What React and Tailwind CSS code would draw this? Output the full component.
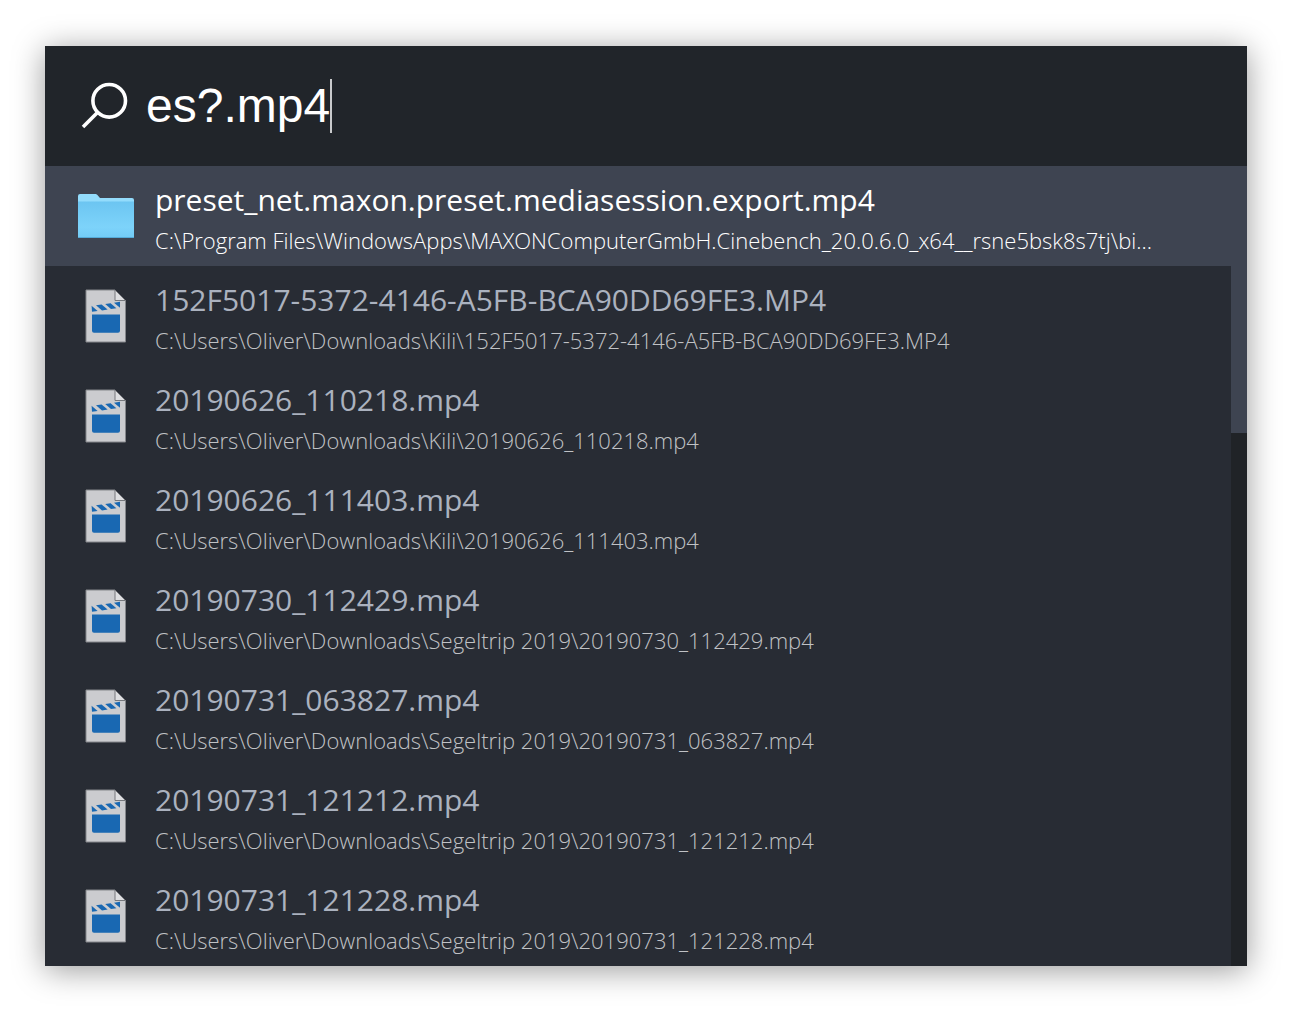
import { useState } from "react";

const results = [
  {
    kind: "folder",
    name: "preset_net.maxon.preset.mediasession.export.mp4",
    path: "C:\\Program Files\\WindowsApps\\MAXONComputerGmbH.Cinebench_20.0.6.0_x64__rsne5bsk8s7tj\\bi...",
  },
  {
    kind: "video",
    name: "152F5017-5372-4146-A5FB-BCA90DD69FE3.MP4",
    path: "C:\\Users\\Oliver\\Downloads\\Kili\\152F5017-5372-4146-A5FB-BCA90DD69FE3.MP4",
  },
  {
    kind: "video",
    name: "20190626_110218.mp4",
    path: "C:\\Users\\Oliver\\Downloads\\Kili\\20190626_110218.mp4",
  },
  {
    kind: "video",
    name: "20190626_111403.mp4",
    path: "C:\\Users\\Oliver\\Downloads\\Kili\\20190626_111403.mp4",
  },
  {
    kind: "video",
    name: "20190730_112429.mp4",
    path: "C:\\Users\\Oliver\\Downloads\\Segeltrip 2019\\20190730_112429.mp4",
  },
  {
    kind: "video",
    name: "20190731_063827.mp4",
    path: "C:\\Users\\Oliver\\Downloads\\Segeltrip 2019\\20190731_063827.mp4",
  },
  {
    kind: "video",
    name: "20190731_121212.mp4",
    path: "C:\\Users\\Oliver\\Downloads\\Segeltrip 2019\\20190731_121212.mp4",
  },
  {
    kind: "video",
    name: "20190731_121228.mp4",
    path: "C:\\Users\\Oliver\\Downloads\\Segeltrip 2019\\20190731_121228.mp4",
  },
];

function SearchIcon() {
  return (
    <svg viewBox="0 0 48 48" className="size-12 shrink-0" fill="none" stroke="#fff" strokeWidth="3.6" aria-hidden="true">
      <circle cx="28.2" cy="18.8" r="16.3" />
      <path d="M16.700 30.300 2 45" />
    </svg>
  );
}

function FolderIcon() {
  return (
    <svg viewBox="0 0 56 46" className="h-[46px] w-14" aria-hidden="true">
      <defs>
        <linearGradient id="folder-front" x1="0" y1="0" x2="0" y2="1">
          <stop offset="0" stopColor="#6cc5f1" />
          <stop offset="0.7" stopColor="#7dd3fa" />
          <stop offset="1" stopColor="#72cbf5" />
        </linearGradient>
      </defs>
      <path d="M0 3a2 2 0 0 1 2-2h15.500q1 0 1.700.8L22 5h32a2 2 0 0 1 2 2v8H0z" fill="#93dcfc" />
      <path d="M0 8.500h56V44a1 1 0 0 1-1 1H1a1 1 0 0 1-1-1z" fill="url(#folder-front)" />
      <path d="M.5 44.500h55" stroke="#55abd8" />
    </svg>
  );
}

function VideoIcon() {
  return (
    <svg viewBox="0 0 42 54" className="h-[54px] w-[42px]" aria-hidden="true">
      <path d="M1 1h29l10.500 10.500V53H1z" fill="#cbcccf" stroke="#85878b" />
      <path d="M30 1v10.500h10.500z" fill="#dedfe1" stroke="#77797d" strokeLinejoin="round" />
      <path d="M7 25.500h28v16.300a2 2 0 0 1-2 2H9a2 2 0 0 1-2-2z" fill="#1968b2" />
      <g fill="#1968b2">
        <path d="M6.600 16.800 12.600 22 7 22.700z" />
        <path d="M11 16.300 16.600 15.500 22.600 20.600 17 21.400z" />
        <path d="M20.200 15 25.600 14.200 31.400 19.200 26 20z" />
        <path d="M29 13.700 35 12.800V18.800z" />
      </g>
    </svg>
  );
}

function Result({ item, selected, onSelect }) {
  return (
    <li>
      <button
        type="button"
        aria-current={selected}
        onClick={onSelect}
        className={
          selected
            ? "flex h-[100px] w-full items-center bg-[#3e4451] pl-8 text-left text-white"
            : "flex h-[100px] w-full items-center pl-8 text-left text-[#abb2bf]"
        }
      >
        <span className="flex w-[58px] shrink-0 justify-center">
          {item.kind === "folder" ? <FolderIcon /> : <VideoIcon />}
        </span>
        <span className="ml-5 min-w-0 flex-1 pt-2 pr-8">
          <span className="block truncate text-[30px] leading-10">{item.name}</span>
          <span
            className={
              selected
                ? "block truncate text-[22px] leading-10 font-light text-white"
                : "block truncate text-[22px] leading-10 font-light text-[#c0c2c5]"
            }
          >
            {item.path}
          </span>
        </span>
      </button>
    </li>
  );
}

export default function App() {
  const [query, setQuery] = useState("es?.mp4");
  const [selected, setSelected] = useState(0);

  return (
    <div className="min-h-screen bg-white px-[45px] py-[46px]">
      <main className="bg-[#282c34] font-['Open_Sans',sans-serif] shadow-[0_4px_30px_rgba(0,0,0,0.4)]">
        <label className="flex h-[120px] items-center bg-[#21252a] pl-9">
          <SearchIcon />
          <input
            type="text"
            aria-label="Search"
            value={query}
            onChange={(e) => setQuery(e.target.value)}
            className="ml-[17px] field-sizing-content max-w-full bg-transparent font-['Liberation_Sans',sans-serif] text-[48px] leading-[56px] text-white caret-transparent outline-none"
          />
          <span className="h-[54px] w-0.5 bg-[#c8cacc]" aria-hidden="true" />
        </label>
        <div className="flex">
          <ul className="min-w-0 flex-1">
            {results.map((item, i) => (
              <Result key={item.name} item={item} selected={i === selected} onSelect={() => setSelected(i)} />
            ))}
          </ul>
          <div className="w-4 shrink-0 bg-[#202327]" aria-hidden="true">
            <div className="h-1/3 bg-[#3e4451]" />
          </div>
        </div>
      </main>
    </div>
  );
}
